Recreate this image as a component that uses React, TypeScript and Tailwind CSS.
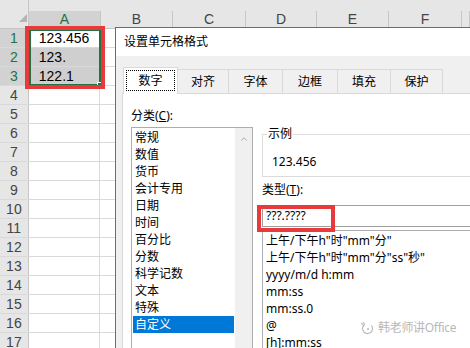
import { ChevronUp } from 'lucide-react'

const cols = [
  { key: 'A', w: 'w-[72px]' },
  { key: 'B', w: 'w-[72px]' },
  { key: 'C', w: 'w-[73px]' },
  { key: 'D', w: 'w-[71px]' },
  { key: 'E', w: 'w-[72px]' },
  { key: 'F', w: 'w-[73px]' },
  { key: '', w: 'flex-1' },
]

const cellText: Record<number, string> = { 1: '123.456', 2: '123.', 3: '122.1' }

const tabs = ['对齐', '字体', '边框', '填充', '保护']
const tabW = ['w-[51px]', 'w-[54px]', 'w-[55px]', 'w-[53px]', 'w-[52px]']

const categories = ['常规', '数值', '货币', '会计专用', '日期', '时间', '百分比', '分数', '科学记数', '文本', '特殊', '自定义']

const types = [
  '上午/下午h"时"mm"分"',
  '上午/下午h"时"mm"分"ss"秒"',
  'yyyy/m/d h:mm',
  'mm:ss',
  'mm:ss.0',
  '@',
  '[h]:mm:ss',
]

function Sheet() {
  const rows = Array.from({ length: 17 }, (_, i) => i + 1)
  return (
    <div className="flex flex-col font-['Liberation_Sans','Noto_Sans_CJK_SC',sans-serif] text-[14px]">
      <div className="flex h-[29px] items-end bg-[#e6e6e6] border-b border-[#c6c6c6]">
        <div className="relative h-full w-[29px] border-r border-[#c6c6c6]">
          <svg className="absolute left-[19px] top-[14px]" width="8" height="8" viewBox="0 0 8 8">
            <path d="M8 0 L8 8 L0 8 Z" fill="#b4b4b4" />
          </svg>
        </div>
        {cols.map((c) => (
          <div
            key={c.key || 'g'}
            className={`${c.w} flex h-[17px] items-center justify-center border-r border-[#c6c6c6] ${
              c.key === 'A' ? 'bg-[#d2d2d2] text-[#217346]' : 'text-[#444]'
            }`}
          >
            {c.key}
          </div>
        ))}
      </div>
      {rows.map((r) => {
        const sel = r <= 3
        return (
          <div key={r} className="flex h-[19px] border-b border-[#d9d9d9]">
            <div
              className={`flex w-[29px] items-center justify-center border-r border-[#c6c6c6] ${
                sel ? 'bg-[#d2d2d2] text-[#217346]' : 'bg-[#e6e6e6] text-[#444]'
              }`}
            >
              {r}
            </div>
            {cols.map((c) => (
              <div
                key={c.key || 'g'}
                className={`${c.w} flex items-center border-r border-[#d9d9d9] pl-[10px] text-black ${
                  c.key === 'A' && (r === 2 || r === 3) ? 'bg-[#cfcfcf]' : 'bg-white'
                }`}
              >
                {c.key === 'A' ? cellText[r] : ''}
              </div>
            ))}
          </div>
        )
      })}
    </div>
  )
}

function Dialog() {
  return (
    <div className="absolute left-[115px] top-[27px] flex h-[330px] w-[370px] flex-col border-l border-t border-[#2b79d6] bg-[#f0f0f0] font-['Noto_Sans','Noto_Sans_CJK_SC',sans-serif] text-[12px] text-black">
      <div className="flex h-[29px] items-center bg-white pl-[8px]">设置单元格格式</div>
      <div className="flex flex-1 flex-col pl-[6px] pt-[11px]">
        <div className="flex h-[26px] items-end pl-[1px]">
          <div className="relative z-10 -mb-px flex h-[27px] w-[55px] border-l border-r border-t border-[#d9d9d9] bg-white px-[2px] pb-[3px] pt-[2px]">
            <div className="flex flex-1 items-center justify-center border border-dotted border-black">数字</div>
          </div>
          {tabs.map((t, i) => (
            <div
              key={t}
              className={`${tabW[i]} flex h-[24px] items-center justify-center border-r border-t border-[#d9d9d9]`}
            >
              {t}
            </div>
          ))}
        </div>
        <div className="flex flex-1 border-l border-t border-[#d9d9d9] bg-white pl-[8px]">
          <div className="flex flex-col pt-[14px]">
            <div className="h-[16px] leading-[16px]">
              分类(<span className="underline">C</span>):
            </div>
            <div className="mt-[3px] flex h-[230px] w-[122px] border border-[#abadb3]">
              <div className="flex flex-1 flex-col px-[1px] pt-[1px]">
                {categories.map((c) => (
                  <div
                    key={c}
                    className={`h-[17px] pl-[2px] leading-[17px] ${c === '自定义' ? 'bg-[#0078d7] text-white' : ''}`}
                  >
                    {c}
                  </div>
                ))}
              </div>
              <div className="flex w-[17px] justify-center bg-[#f0f0f0] pt-[6px]">
                <ChevronUp size={10} strokeWidth={2} className="text-[#a0a0a0]" />
              </div>
            </div>
          </div>
          <div className="ml-[9px] flex w-[230px] flex-col pt-[32px]">
            <fieldset className="border border-[#dcdcdc] pb-[6px] pt-[12px]">
              <legend className="ml-[4px] px-[1px] leading-[16px]">示例</legend>
              <div className="pl-[9px] leading-[16px]">123.456</div>
            </fieldset>
            <div className="mt-[5px] h-[16px] leading-[16px]">
              类型(<span className="underline">T</span>):
            </div>
            <div className="mt-[7px] flex h-[22px] items-center border border-[#a0a0a0] pl-[3px]">???.????</div>
            <div className="mt-[3px] flex flex-col border-l border-t border-[#abadb3] pl-[3px] pt-px">
              {types.map((t) => (
                <div key={t} className="h-[17px] leading-[17px]">
                  {t}
                </div>
              ))}
            </div>
          </div>
        </div>
      </div>
    </div>
  )
}

export default function App() {
  return (
    <div className="relative h-[348px] w-[470px] overflow-hidden bg-white">
      <Sheet />
      <Dialog />
      {/* selection + annotations */}
      <div className="absolute left-[29px] top-[29px] h-[57px] w-[72px] border-2 border-[#217346]" />
      <div className="absolute left-[97px] top-[82px] h-[5px] w-[5px] border border-white bg-[#217346]" />
      <div className="absolute left-[25px] top-[26px] h-[63px] w-[80px] border-4 border-[#e83a3a]" />
      <div className="absolute left-[257px] top-[205px] h-[27px] w-[78px] border-4 border-[#e83a3a]" />
      <div className="absolute left-[360px] top-[319px] flex items-center gap-[4px] font-['Noto_Sans','Noto_Sans_CJK_SC',sans-serif] text-[12px] tracking-tight text-[#b8b8b8]">
        <svg width="14" height="14" viewBox="0 0 14 14" fill="none" stroke="#b8b8b8" strokeWidth="1.2">
          <path d="M5 3.2 A5 5 0 1 0 11.5 4.5" />
          <path d="M1.5 2 L3 3.8 M3.5 1 L4.2 2.8" />
          <circle cx="8" cy="8" r="1" fill="#b8b8b8" stroke="none" />
        </svg>
        <span>韩老师讲Office</span>
      </div>
    </div>
  )
}
